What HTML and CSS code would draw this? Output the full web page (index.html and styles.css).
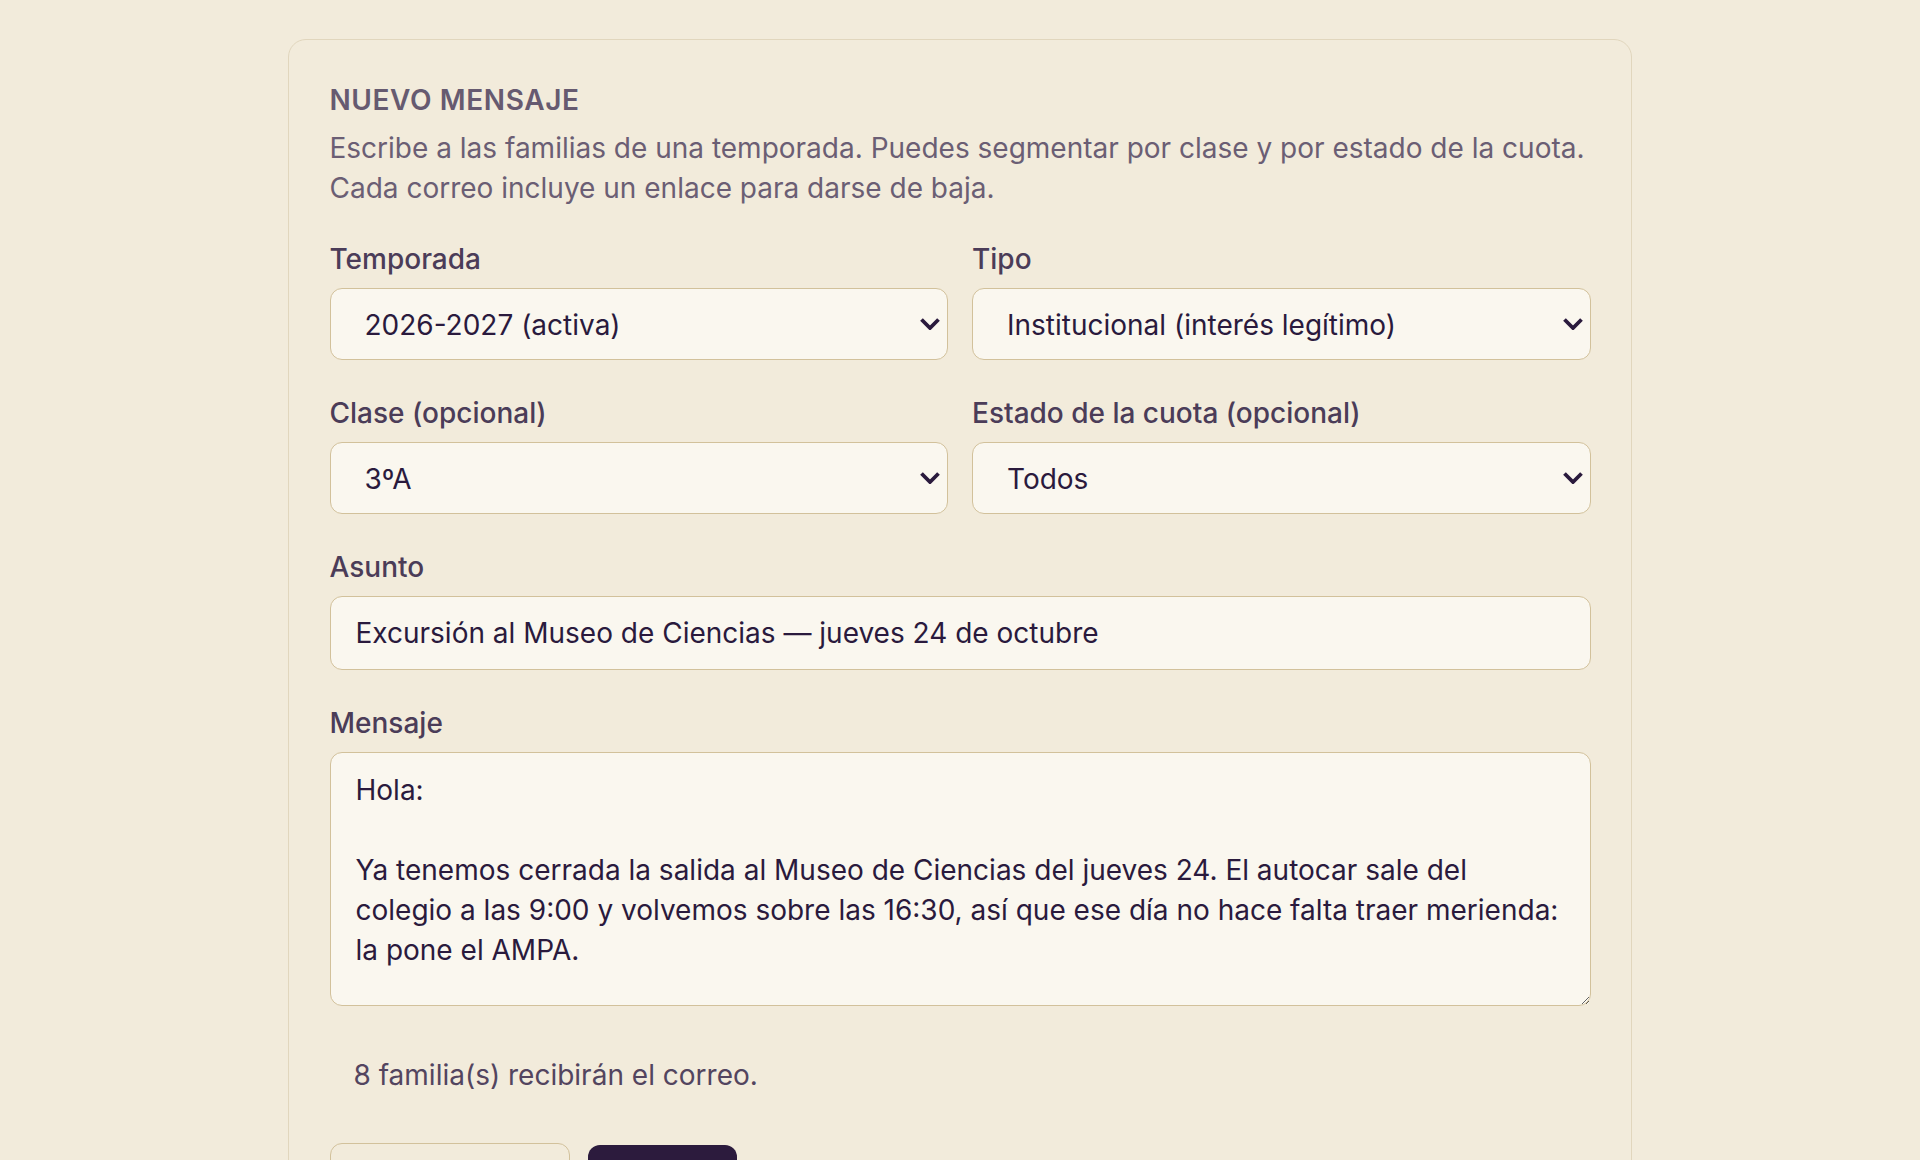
FILE: index.html
```html
<!DOCTYPE html>
<html lang="es">
<head>
<meta charset="utf-8">
<title>Nuevo mensaje</title>
<link rel="stylesheet" href="styles.css">
</head>
<body>
<main class="page">
  <section class="card">
    <h2 class="card-title">Nuevo mensaje</h2>
    <p class="card-desc">Escribe a las familias de una temporada. Puedes segmentar por clase y por estado de la cuota.<br>Cada correo incluye un enlace para darse de baja.</p>
    <form class="form">
      <div class="grid-2">
        <label class="field">
          <span class="field-label">Temporada</span>
          <span class="select-wrap">
            <select class="control select">
              <option>2026-2027 (activa)</option>
              <option>2025-2026</option>
            </select>
            <svg class="chev" viewBox="0 0 20 12" width="20" height="12" aria-hidden="true"><polyline points="1.5,1.5 10,10 18.5,1.5"/></svg>
          </span>
        </label>
        <label class="field">
          <span class="field-label">Tipo</span>
          <span class="select-wrap">
            <select class="control select">
              <option>Institucional (interés legítimo)</option>
              <option>Comercial (consentimiento)</option>
            </select>
            <svg class="chev" viewBox="0 0 20 12" width="20" height="12" aria-hidden="true"><polyline points="1.5,1.5 10,10 18.5,1.5"/></svg>
          </span>
        </label>
        <label class="field">
          <span class="field-label">Clase (opcional)</span>
          <span class="select-wrap">
            <select class="control select">
              <option>3ºA</option>
              <option>Todas</option>
            </select>
            <svg class="chev" viewBox="0 0 20 12" width="20" height="12" aria-hidden="true"><polyline points="1.5,1.5 10,10 18.5,1.5"/></svg>
          </span>
        </label>
        <label class="field">
          <span class="field-label">Estado de la cuota (opcional)</span>
          <span class="select-wrap">
            <select class="control select">
              <option>Todos</option>
              <option>Pagada</option>
              <option>Pendiente</option>
            </select>
            <svg class="chev" viewBox="0 0 20 12" width="20" height="12" aria-hidden="true"><polyline points="1.5,1.5 10,10 18.5,1.5"/></svg>
          </span>
        </label>
      </div>
      <label class="field">
        <span class="field-label">Asunto</span>
        <input class="control input" type="text" value="Excursión al Museo de Ciencias — jueves 24 de octubre">
      </label>
      <label class="field">
        <span class="field-label">Mensaje</span>
        <textarea class="control textarea">Hola:

Ya tenemos cerrada la salida al Museo de Ciencias del jueves 24. El autocar sale del colegio a las 9:00 y volvemos sobre las 16:30, así que ese día no hace falta traer merienda: la pone el AMPA.</textarea>
      </label>
      <p class="recipients">8 familia(s) recibirán el correo.</p>
      <div class="actions">
        <button type="button" class="btn btn-outline">Enviar prueba</button>
        <button type="submit" class="btn btn-primary">Enviar</button>
      </div>
    </form>
  </section>
</main>
</body>
</html>
```

FILE: styles.css
```css
html, body {
  margin: 0;
  padding: 0;
  background: #f2ebdb;
}

body {
  font-family: Inter, "Noto Sans", "Liberation Sans", sans-serif;
  color: #2a1a3d;
  font-size: 28px;
  line-height: 40.5px;
}

.page {
  padding-top: 39px;
}

.card {
  box-sizing: border-box;
  width: 1344px;
  margin: 0 auto;
  background: #f2ebdb;
  border: 1.5px solid #e1d6bd;
  border-radius: 18px;
  padding: 40px 40.5px 60px;
}

.card-title {
  margin: 0;
  font-size: 28px;
  line-height: 40.5px;
  font-weight: 600;
  text-transform: uppercase;
  letter-spacing: 0.6px;
  color: #665a70;
}

.card-desc {
  margin: 7px 0 0;
  font-size: 28px;
  line-height: 40px;
  color: #6b5e74;
  white-space: nowrap;
}

.form {
  margin-top: 31px;
  display: flex;
  flex-direction: column;
  gap: 33px;
}

.grid-2 {
  display: grid;
  grid-template-columns: 1fr 1fr;
  column-gap: 24px;
  row-gap: 33px;
}

.field {
  display: flex;
  flex-direction: column;
  min-width: 0;
}

.field-label {
  display: block;
  font-size: 28px;
  line-height: 40.5px;
  font-weight: 500;
  color: #4b3c58;
  margin-bottom: 8.5px;
}

.control {
  box-sizing: border-box;
  width: 100%;
  margin: 0;
  font-family: inherit;
  font-size: 28px;
  line-height: 40px;
  color: #2a1a3d;
  background: #faf7ef;
  border: 1.5px solid #d2c19b;
  border-radius: 12px;
  outline: none;
}

.select-wrap {
  position: relative;
  display: block;
}

.select {
  -webkit-appearance: none;
  appearance: none;
  height: 72px;
  padding: 3px 56px 0 34px;
}

.chev {
  position: absolute;
  right: 8px;
  top: 30px;
  width: 20px;
  height: 12px;
  pointer-events: none;
  fill: none;
  stroke: #2a1a3d;
  stroke-width: 3.8;
  stroke-linejoin: miter;
  stroke-linecap: butt;
}

.input {
  height: 74px;
  padding: 15.5px 25px;
}

.textarea {
  display: block;
  height: 254px;
  padding: 17px 25px;
  resize: vertical;
}

.recipients {
  margin: 0;
  padding: 16.5px 24px;
  font-size: 28px;
  line-height: 40.5px;
  color: #53455f;
}

.actions {
  display: flex;
  align-items: center;
  gap: 18px;
  margin-top: -2px;
}

.btn {
  box-sizing: border-box;
  font-family: inherit;
  font-size: 28px;
  line-height: 40.5px;
  font-weight: 600;
  border-radius: 12px;
  cursor: pointer;
}

.btn-outline {
  width: 240px;
  height: 69px;
  background: transparent;
  color: #2a1a3d;
  border: 1.5px solid #d2c19b;
}

.btn-primary {
  width: 149px;
  height: 66px;
  background: #2c1b3d;
  color: #faf7ef;
  border: 0;
}
```
